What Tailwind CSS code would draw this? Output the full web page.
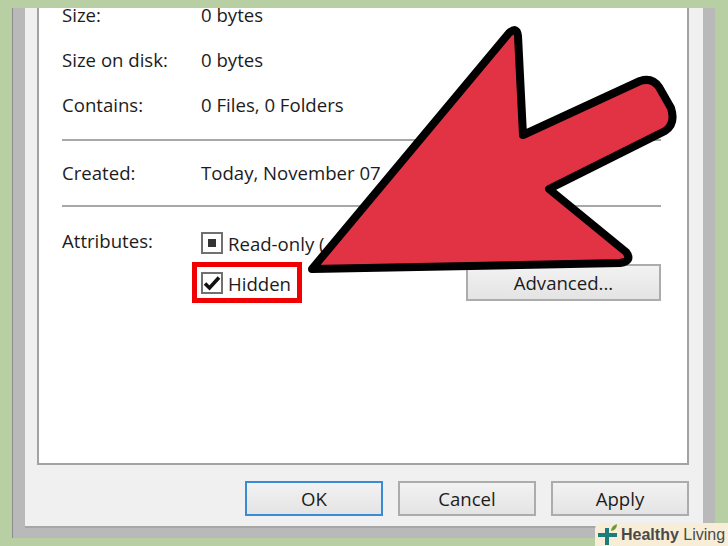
<!DOCTYPE html>
<html lang="en">
<head>
  <meta charset="UTF-8" />
  <title>Properties</title>
  <script src="https://cdn.jsdelivr.net/npm/@tailwindcss/browser@4"></script>
</head>
<body class="relative w-[728px] h-[546px] overflow-hidden bg-[#b7cfa2] font-['Open_Sans',sans-serif] text-[18.6px] text-[#1c1c1c]">

  <!-- Window frame -->
  <div class="ml-3 mr-[13px] pt-2 h-[538px]">
    <div class="h-full border-l border-[#8c8c8c] bg-[#b9b9b9] pl-3 pr-3 pb-[10px]">
      <div class="h-full flex flex-col bg-[#f0f0f0] border-b-2 border-[#a6a6a6] pl-3 pr-[14px]">

        <!-- Properties panel -->
        <div class="h-[457px] bg-white border-x-2 border-b-2 border-[#a3a3a3] pl-[23px] pr-[26px]">
          <div class="grid grid-cols-[139px_1fr] h-[14px] leading-[14px]"><span>Size:</span><span>0 bytes</span></div>
          <div class="grid grid-cols-[139px_1fr] h-[14px] leading-[14px] mt-[31px]"><span>Size on disk:</span><span>0 bytes</span></div>
          <div class="grid grid-cols-[139px_1fr] h-[14px] leading-[14px] mt-[31px]"><span>Contains:</span><span>0 Files, 0 Folders</span></div>
          <div class="h-0.5 bg-[#a8a8a8] mt-[27px]"></div>
          <div class="grid grid-cols-[139px_1fr] h-[14px] leading-[14px] mt-[25px]"><span>Created:</span><span>Today, November 07</span></div>
          <div class="h-0.5 bg-[#a8a8a8] mt-[25px]"></div>

          <!-- Attributes -->
          <div class="grid grid-cols-[130px_1fr] mt-[25px]">
            <span class="leading-[18px]">Attributes:</span>
            <div>
              <div class="flex items-center gap-[5px] ml-[9px] h-[22px]">
                <span class="flex items-center justify-center w-[22px] h-[22px] border-2 border-[#707070]"><span class="w-2 h-2 bg-[#333]"></span></span>
                <span class="pt-0.5">Read-only (</span>
              </div>
              <div class="flex items-start justify-between mt-[8px]">
                <div class="flex items-center gap-[5px] w-[110px] h-[41px] pl-1 border-[5px] border-[#f00000]">
                  <span class="flex items-center justify-center w-[22px] h-[22px] border-2 border-[#707070]">
                    <svg width="18" height="16" viewBox="0 0 18 16"><path d="M2 8.5 L6.5 13 L16 2.5" fill="none" stroke="#111" stroke-width="3.6"/></svg>
                  </span>
                  <span class="pt-0.5">Hidden</span>
                </div>
                <button class="w-[195px] h-[37px] mt-[2px] border-2 border-[#acacac] bg-gradient-to-b from-[#f2f2f2] to-[#e4e4e4]">Advanced...</button>
              </div>
            </div>
          </div>
        </div>

        <!-- Dialog buttons -->
        <div class="flex justify-end gap-[15px] pt-4">
          <button class="w-[138px] h-[35px] border-2 border-[#3b8ad6] bg-gradient-to-b from-[#f2f2f2] to-[#e4e4e4]">OK</button>
          <button class="w-[138px] h-[35px] border-2 border-[#acacac] bg-gradient-to-b from-[#f2f2f2] to-[#e4e4e4]">Cancel</button>
          <button class="w-[138px] h-[35px] border-2 border-[#acacac] bg-gradient-to-b from-[#f2f2f2] to-[#e4e4e4]">Apply</button>
        </div>
      </div>
    </div>
  </div>

  <!-- Red arrow callout -->
  <svg class="absolute left-0 top-0" width="728" height="546" viewBox="0 0 728 546">
    <path d="M312 269 L509 33 Q517 26 518 36 L523 135 L640 81 Q652 77 659 87 L671 108 Q676 124 665 131 L549 189 L626 252 Q633 261 620 263 Z" fill="#e23344" stroke="#000" stroke-width="8" stroke-linejoin="round"/>
  </svg>

  <!-- Watermark -->
  <div class="absolute right-0 bottom-0 flex items-center gap-[2px] w-[133px] h-[23px] pl-[2px] rounded-tl-md bg-[#f8eed8] font-['Liberation_Sans',sans-serif] text-[16px] leading-none whitespace-nowrap text-[#4a4a4a]">
    <svg class="shrink-0" width="22" height="22" viewBox="0 0 22 22">
      <path d="M8 9V4h4v5h8v4h-8v8H8v-8H1V9z" fill="#1d7d78"/>
      <path d="M14 7 Q14 2 20 0 Q20 6 14 7z" fill="#6f9a3c"/>
    </svg>
    <span><b>Healthy</b> Living</span>
  </div>
</body>
</html>
